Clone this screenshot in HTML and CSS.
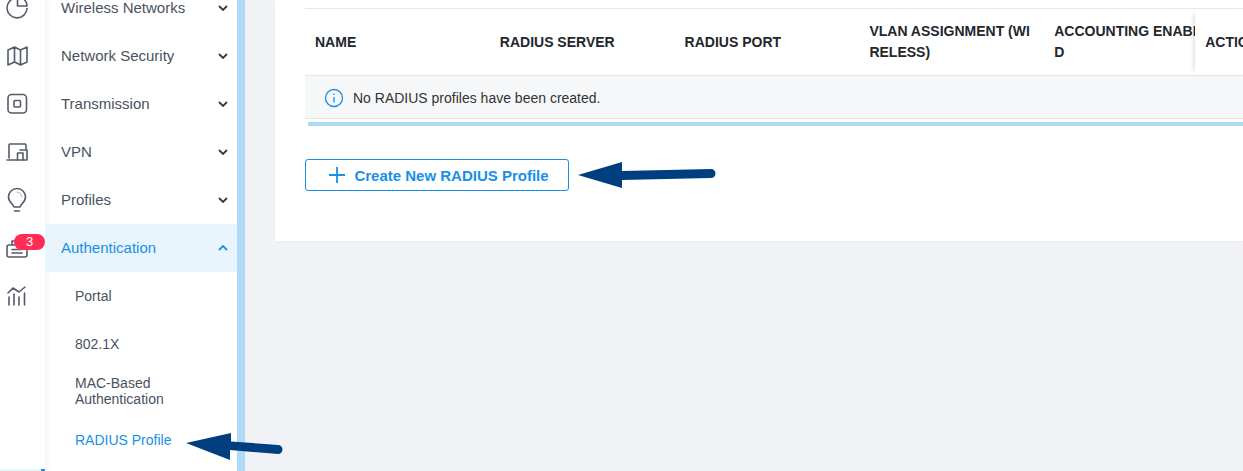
FILE: index.html
```html
<!DOCTYPE html>
<html lang="en">
<head>
  <meta charset="UTF-8" />
  <title>RADIUS Profile</title>
  <link rel="stylesheet" href="styles.css">
</head>
<body>
  <div class="page">
    <aside class="rail">
      <div class="rail-icon first">
        <svg width="36" height="36" viewBox="0 0 36 36"><path d="M15.500 8A10 10 0 1 0 27 18.500"/><path d="M17.500 16V6.500A9.500 9.500 0 0 1 27 16Z"/></svg>
      </div>
      <div class="rail-icon">
        <svg width="36" height="36" viewBox="0 0 36 36"><path d="M8 12l6.500-3 6 3 6.500-3v15l-6.500 3-6-3-6.500 3z M14.500 9v15 M20.500 12v15"/></svg>
      </div>
      <div class="rail-icon">
        <svg width="36" height="36" viewBox="0 0 36 36"><rect x="8" y="8.500" width="18.500" height="18.500" rx="3.500"/><rect x="14" y="14.500" width="6.500" height="6.500" rx="1"/></svg>
      </div>
      <div class="rail-icon">
        <svg width="36" height="36" viewBox="0 0 36 36"><path d="M9 24V11a1 1 0 0 1 1-1h15a1 1 0 0 1 1 1v4 M7 26h10"/><rect x="17.500" y="19" width="5.500" height="7"/><path d="M20 16h7v10h-4"/></svg>
      </div>
      <div class="rail-icon">
        <svg width="36" height="36" viewBox="0 0 36 36"><path d="M14 25c0-3-5.500-4-5.500-10a8.500 8.500 0 0 1 17 0c0 6-5.500 7-5.500 10z M14.500 29h5"/><path class="light" d="M17 10a5 5 0 0 1 5 5"/></svg>
      </div>
      <div class="rail-icon">
        <svg width="36" height="36" viewBox="0 0 36 36"><path d="M12 15v-4h4 M9 15h16a2 2 0 0 1 2 2v8a2 2 0 0 1-2 2H9a2 2 0 0 1-2-2v-8a2 2 0 0 1 2-2z M12 19.500h10 M12 23h10"/></svg>
        <span class="badge">3</span>
      </div>
      <div class="rail-icon">
        <svg width="36" height="36" viewBox="0 0 36 36"><path d="M9 27v-8 M14 27v-11 M19 27v-8 M24.500 27v-12 M8 15l5-5 6 4 6-5"/></svg>
      </div>
      <div class="rail-mark"></div>
    </aside>

    <nav class="menu">
      <ul class="menu-list">
        <li class="menu-item">Wireless Networks<svg class="chev" width="10" height="6" viewBox="0 0 10 6"><path d="M1 1l4 4 4-4"/></svg></li>
        <li class="menu-item">Network Security<svg class="chev" width="10" height="6" viewBox="0 0 10 6"><path d="M1 1l4 4 4-4"/></svg></li>
        <li class="menu-item">Transmission<svg class="chev" width="10" height="6" viewBox="0 0 10 6"><path d="M1 1l4 4 4-4"/></svg></li>
        <li class="menu-item">VPN<svg class="chev" width="10" height="6" viewBox="0 0 10 6"><path d="M1 1l4 4 4-4"/></svg></li>
        <li class="menu-item">Profiles<svg class="chev" width="10" height="6" viewBox="0 0 10 6"><path d="M1 1l4 4 4-4"/></svg></li>
        <li class="menu-item open">Authentication<svg class="chev" width="10" height="6" viewBox="0 0 10 6"><path d="M1 5l4-4 4 4"/></svg></li>
        <li class="sub-item">Portal</li>
        <li class="sub-item">802.1X</li>
        <li class="sub-item two-line">MAC-Based<br>Authentication</li>
        <li class="sub-item current">RADIUS Profile</li>
      </ul>
    </nav>

    <main class="content">
      <section class="card">
        <div class="table">
          <div class="table-head">
            <div class="col">NAME</div>
            <div class="col">RADIUS SERVER</div>
            <div class="col">RADIUS PORT</div>
            <div class="col">VLAN ASSIGNMENT (WI<br>RELESS)</div>
            <div class="col clip">ACCOUNTING ENABLE<br>D</div>
            <div class="col action">ACTION</div>
          </div>
          <div class="table-empty">
            <svg width="20" height="20" viewBox="0 0 20 20"><circle cx="10" cy="10" r="8.500"/><path d="M10 9v5.500 M10 5.500v1.500"/></svg>
            No RADIUS profiles have been created.
          </div>
        </div>
        <div class="table-scroll"></div>
        <button class="create-btn">
          <svg width="16" height="16" viewBox="0 0 16 16"><path d="M8 0v16 M0 8h16"/></svg>
          Create New RADIUS Profile
        </button>
      </section>
    </main>
  </div>

  <!-- arrows drawn over the page -->
  <svg class="arrow arrow-menu" width="100" height="30" viewBox="0 0 100 30"><path d="M0 10L45 0v8.500l47 3.500a4.500 4.500 0 0 1 0 9l-48-4v10z"/></svg>
  <svg class="arrow arrow-btn" width="142" height="30" viewBox="0 0 142 30"><path d="M0 14L44 1v9l89-2a4.500 4.500 0 0 1 0 9l-89 2v8z"/></svg>
</body>
</html>
```

FILE: styles.css
```css
* {
  box-sizing: border-box;
}

html, body {
  height: 100%;
}

body {
  margin: 0;
  font-family: "Liberation Sans", Arial, sans-serif;
  font-size: 14px;
  color: #333;
  background: #f0f2f5;
  overflow: hidden;
  position: relative;
}

.page {
  display: flex;
  height: 471px;
}

/* icon rail */
.rail {
  width: 45px;
  background: #fff;
  flex-shrink: 0;
  position: relative;
}

.rail-icon {
  height: 48px;
  display: flex;
  align-items: center;
  justify-content: center;
  position: relative;
}

.rail-icon.first {
  margin-top: -16px;
}

.rail-icon svg {
  margin-right: 9px;
  flex-shrink: 0;
  overflow: visible;
  fill: none;
  stroke: #555b6b;
  stroke-width: 1.600;
  stroke-linejoin: round;
  stroke-linecap: round;
}

.rail-icon .light {
  stroke-width: 1;
  stroke: #a9adb6;
}

.badge {
  position: absolute;
  left: 14px;
  top: 10px;
  width: 31px;
  height: 16px;
  border-radius: 8px;
  background: #ff2d55;
  color: #fff;
  font-size: 13px;
  line-height: 16px;
  text-align: center;
}

.rail-mark {
  position: absolute;
  left: 0;
  bottom: 0;
  width: 45px;
  height: 2px;
  background: #e9f5fc;
  border-right: 4px solid #1890e8;
}

/* second level menu */
.menu {
  width: 192px;
  background: #fff;
  box-shadow: inset 6px 0 6px -4px rgba(0, 0, 0, 0.05);
  flex-shrink: 0;
  overflow: hidden;
}

.menu-list {
  list-style: none;
  margin: -16px 0 0;
  padding: 0;
}

.menu-item {
  height: 48px;
  padding: 0 9px 1px 16px;
  display: flex;
  align-items: center;
  justify-content: space-between;
  font-size: 15px;
  color: #4a5260;
}

.menu-item.open {
  background: #e9f5fc;
  color: #1890e8;
}

.chev {
  fill: none;
  stroke: #333a46;
  stroke-width: 1.800;
}

.open .chev {
  stroke: #1890e8;
}

.sub-item {
  min-height: 48px;
  padding: 0 16px 0 30px;
  display: flex;
  align-items: center;
  color: #4a5260;
  line-height: 16px;
}

.sub-item.two-line {
  padding-bottom: 2px;
}

.sub-item.current {
  color: #1890e8;
}

/* main part */
.content {
  flex: 1;
  min-width: 0;
  border-left: 8px solid #aed9f7;
  padding: 0 0 0 30px;
}

.card {
  background: #fff;
  height: 241px;
  padding: 8px 0 0 30px;
  box-shadow: 0 1px 2px rgba(0, 0, 0, 0.03);
}

.table {
  border-top: 1px solid #e6e8ec;
}

.table-head {
  display: flex;
  height: 67px;
  align-items: center;
  font-size: 14px;
  font-weight: bold;
  line-height: 21px;
  color: #23262d;
  border-bottom: 1px solid #e3e5ea;
}

.col {
  width: 184.800px;
  padding-left: 10px;
  flex-shrink: 0;
  white-space: nowrap;
}

.col.clip {
  overflow: hidden;
  width: 151px;
}

.col.action {
  width: 48px;
  height: 64px;
  line-height: 64px;
  overflow: hidden;
  box-shadow: -4px 0 5px -3px rgba(0, 0, 0, 0.15);
}

.table-empty {
  height: 43px;
  background: #f6f7f9;
  border-bottom: 1px solid #e3e5ea;
  display: flex;
  align-items: center;
  gap: 9px;
  padding: 1px 0 0 19px;
  color: #333;
}

.table-empty svg {
  fill: none;
  stroke: #1890e8;
  stroke-width: 1.300;
}

.table-scroll {
  height: 4px;
  margin: 3px 0 0 3px;
  background: #aed9f7;
}

.create-btn {
  margin-top: 33px;
  width: 264px;
  height: 32px;
  background: #fff;
  border: 1px solid #1890e8;
  border-radius: 3px;
  color: #1890e8;
  font-family: inherit;
  font-size: 15px;
  font-weight: bold;
  display: flex;
  align-items: center;
  justify-content: center;
  gap: 9px;
  padding: 0 0 0 4px;
}

.create-btn svg {
  stroke: #1890e8;
  stroke-width: 1.800;
  fill: none;
}

.arrow {
  position: absolute;
  fill: #003f7f;
}

.arrow-menu {
  left: 186px;
  top: 433px;
}

.arrow-btn {
  left: 578px;
  top: 161px;
}
```
